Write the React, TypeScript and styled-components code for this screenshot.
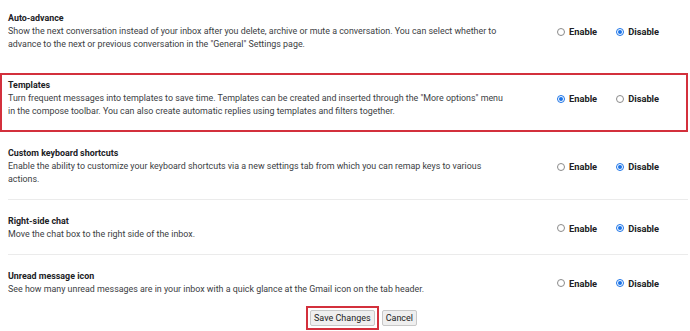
import React from "react";
import styled, { createGlobalStyle } from "styled-components";

const Global = createGlobalStyle`
  html, body { margin: 0; padding: 0; background: #fff; }
  body { font-family: Roboto, "Noto Sans", Arial, sans-serif; color: #222; }
`;

const Page = styled.div`
  width: 690px;
  height: 331px;
  overflow: hidden;
  padding: 12px 0 0 0;
  box-sizing: border-box;
`;

const Row = styled.div<{ $highlight?: boolean }>`
  display: flex;
  align-items: center;
  box-sizing: border-box;
  width: ${(p) => (p.$highlight ? "688px" : "680px")};
  margin-left: ${(p) => (p.$highlight ? "0" : "8px")};
  padding: ${(p) => (p.$highlight ? "4px 0 12px 6px" : "0")};
  border: ${(p) => (p.$highlight ? "2px solid #d3303c" : "none")};
`;

const Spacer = styled.div<{ $h: number }>`
  height: ${(p) => p.$h}px;
`;

const TextCol = styled.div`
  width: 540px;
  flex: none;
`;

const Title = styled.div`
  font-size: 8.9px;
  font-weight: 700;
  line-height: 13px;
  color: #202124;
`;

const Desc = styled.div`
  font-size: 8.9px;
  line-height: 13px;
  color: #3c4043;
  width: 500px;
`;

const Radios = styled.div`
  display: flex;
  align-items: center;
  margin-left: 9px;
  gap: 19px;
`;

const Option = styled.label`
  display: flex;
  align-items: center;
  gap: 4px;
  font-size: 9.3px;
  font-weight: 700;
  color: #202124;
  font-family: Roboto, Arial, sans-serif;
`;

const Circle = styled.span<{ $on: boolean }>`
  width: 8px;
  height: 8px;
  box-sizing: border-box;
  border-radius: 50%;
  border: 1px solid ${(p) => (p.$on ? "#1a73e8" : "#8a8a8a")};
  display: flex;
  align-items: center;
  justify-content: center;
  &::after {
    content: "";
    width: 4px;
    height: 4px;
    border-radius: 50%;
    background: ${(p) => (p.$on ? "#1a73e8" : "transparent")};
  }
`;

const Buttons = styled.div`
  display: flex;
  align-items: center;
  padding-left: 306px;
  margin-top: -3px;
  gap: 3px;
`;

const Mark = styled.div`
  border: 2px solid #d3303c;
  padding: 2px 2px;
  display: flex;
`;

const Button = styled.button`
  font-family: Roboto, Arial, sans-serif;
  font-size: 9px;
  color: #222;
  background: #efefef;
  border: 1px solid #c8c8c8;
  border-radius: 2px;
  height: 16px;
  padding: 0 3px;
  line-height: 14px;
`;

type Setting = {
  title: string;
  desc: string;
  on: "enable" | "disable";
};

const Radio = ({ on }: { on: "enable" | "disable" }) => (
  <Radios>
    <Option>
      <Circle $on={on === "enable"} />
      Enable
    </Option>
    <Option>
      <Circle $on={on === "disable"} />
      Disable
    </Option>
  </Radios>
);

const settings: Setting[] = [
  {
    title: "Custom keyboard shortcuts",
    desc: "Enable the ability to customize your keyboard shortcuts via a new settings tab from which you can remap keys to various actions.",
    on: "disable",
  },
  {
    title: "Right-side chat",
    desc: "Move the chat box to the right side of the inbox.",
    on: "disable",
  },
  {
    title: "Unread message icon",
    desc: "See how many unread messages are in your inbox with a quick glance at the Gmail icon on the tab header.",
    on: "disable",
  },
];

const Item = styled.div<{ $divider?: boolean }>`
  margin-left: 8px;
  width: 680px;
  box-sizing: border-box;
  padding: 15px 0 13px 0;
  border-bottom: ${(p) => (p.$divider ? "1px solid #ebebeb" : "none")};
  display: flex;
  align-items: center;
`;

export default function App() {
  return (
    <Page>
      <Global />
      <Row>
        <TextCol>
          <Title>Auto-advance</Title>
          <Desc>
            Show the next conversation instead of your inbox after you delete, archive or mute a
            conversation. You can select whether to advance to the next or previous conversation in
            the "General" Settings page.
          </Desc>
        </TextCol>
        <Radio on="disable" />
      </Row>
      <Spacer $h={22} />
      <Row $highlight>
        <TextCol>
          <Title>Templates</Title>
          <Desc>
            Turn frequent messages into templates to save time. Templates can be created and inserted
            through the "More options" menu in the compose toolbar. You can also create automatic
            replies using templates and filters together.
          </Desc>
        </TextCol>
        <Radio on="enable" />
      </Row>
      {settings.map((s, i) => (
        <Item key={s.title} $divider={i < settings.length - 1}>
          <TextCol>
            <Title>{s.title}</Title>
            <Desc>{s.desc}</Desc>
          </TextCol>
          <Radio on={s.on} />
        </Item>
      ))}
      <Buttons>
        <Mark>
          <Button>Save Changes</Button>
        </Mark>
        <Button>Cancel</Button>
      </Buttons>
    </Page>
  );
}
